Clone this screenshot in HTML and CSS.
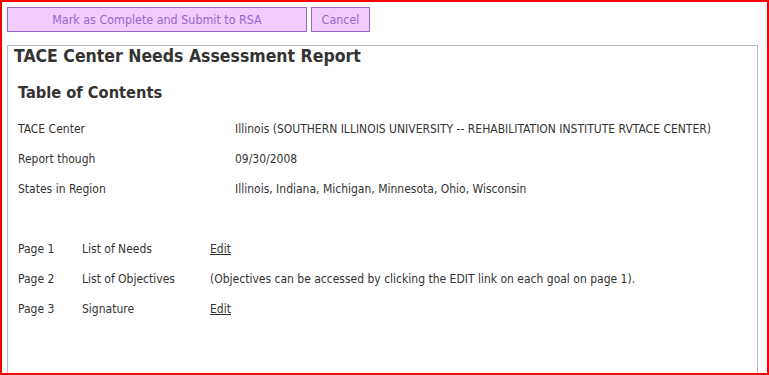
FILE: index.html
```html
<!DOCTYPE html>
<html>
<head>
<meta charset="utf-8">
<link rel="stylesheet" href="styles.css">
</head>
<body>
<div class="frame">
  <div class="actions">
    <button class="btn btn-submit">Mark as Complete and Submit to RSA</button>
    <button class="btn btn-cancel">Cancel</button>
  </div>
  <div class="report">
    <h1 class="title">TACE Center Needs Assessment Report</h1>
    <h2 class="subtitle">Table of Contents</h2>
    <table class="info">
      <tr><td class="lbl">TACE Center</td><td>Illinois (SOUTHERN ILLINOIS UNIVERSITY -- REHABILITATION INSTITUTE RVTACE CENTER)</td></tr>
      <tr><td class="lbl">Report though</td><td>09/30/2008</td></tr>
      <tr><td class="lbl">States in Region</td><td>Illinois, Indiana, Michigan, Minnesota, Ohio, Wisconsin</td></tr>
    </table>
    <table class="pages">
      <tr><td class="pg">Page 1</td><td class="nm">List of Needs</td><td><a href="#">Edit</a></td></tr>
      <tr><td class="pg">Page 2</td><td class="nm">List of Objectives</td><td>(Objectives can be accessed by clicking the EDIT link on each goal on page 1).</td></tr>
      <tr><td class="pg">Page 3</td><td class="nm">Signature</td><td><a href="#">Edit</a></td></tr>
    </table>
  </div>
</div>
</body>
</html>
```

FILE: styles.css
```css
html, body {
  margin: 0;
  padding: 0;
  height: 100%;
  overflow: hidden;
  background: #fff;
}
body {
  font-family: "DejaVu Sans Condensed", "DejaVu Sans", sans-serif;
  font-size: 12px;
  color: #333;
}
.frame {
  box-sizing: border-box;
  height: 375px;
  border: 2px solid #ff0000;
  padding: 5px 9px 0 5px;
  overflow: hidden;
}
.actions {
  display: flex;
  gap: 4px;
  height: 25px;
}
.btn {
  box-sizing: border-box;
  height: 25px;
  background: #f0ccff;
  border: 1px solid #9966cc;
  color: #9966cc;
  font-family: inherit;
  font-size: 12.4px;
  padding: 0;
  margin: 0;
}
.btn-submit { width: 300px; }
.btn-cancel { width: 59px; }
.report {
  margin-top: 13px;
  border: 1px solid #b4bcd4;
  border-bottom: none;
  height: 400px;
  padding: 0 6px;
}
.title {
  margin: 0;
  font-size: 17.5px;
  font-weight: bold;
  line-height: 20px;
}
.subtitle {
  margin: 17px 0 0 4px;
  font-size: 16.3px;
  font-weight: bold;
  line-height: 20px;
}
table {
  border-collapse: collapse;
  margin-left: 4px;
}
td {
  padding: 0;
  height: 30px;
  vertical-align: middle;
  white-space: nowrap;
}
.info { margin-top: 11px; }
.info .lbl { width: 217px; }
.pages { margin-top: 30px; }
.pages .pg { width: 64px; }
.pages .nm { width: 128px; }
a { color: #333; }
```
